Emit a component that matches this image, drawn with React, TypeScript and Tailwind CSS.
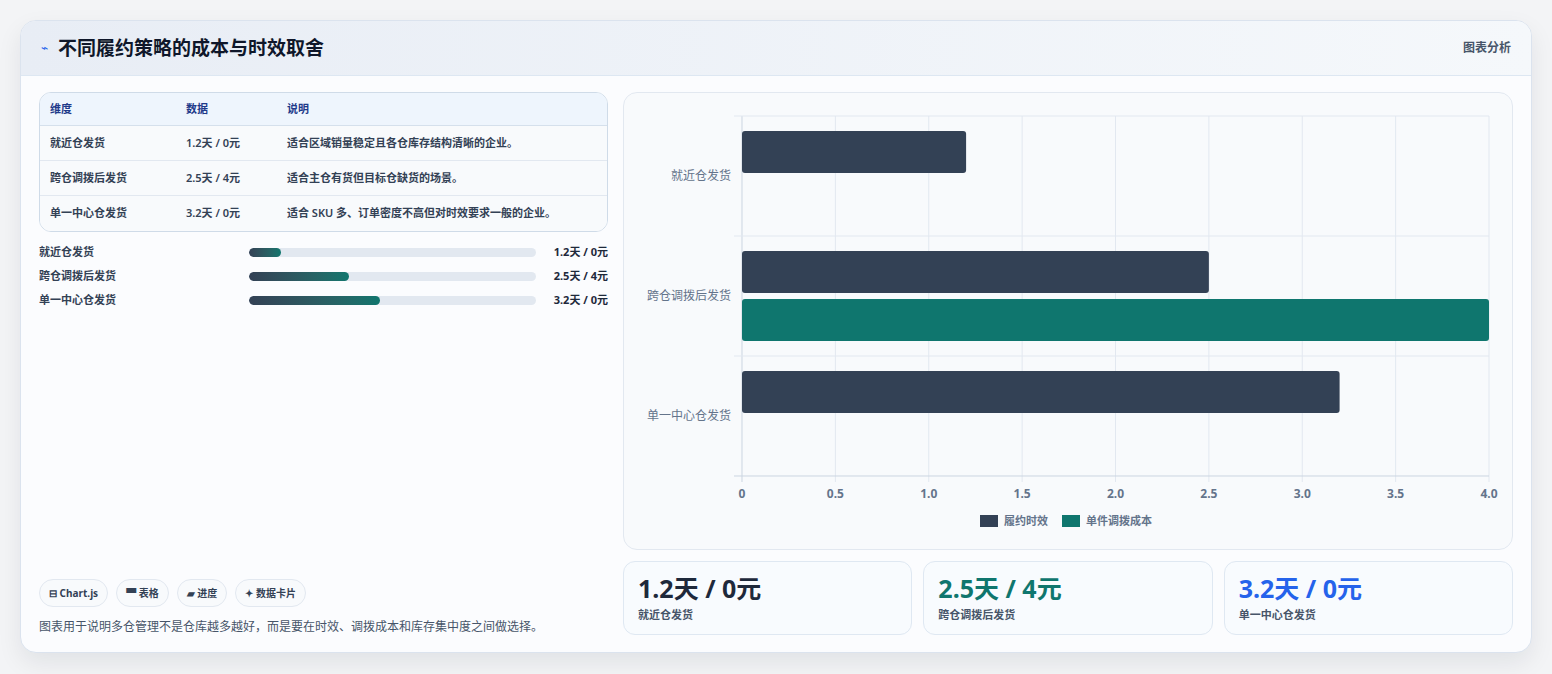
import React from "react";

const F = { fontFamily: '"Noto Sans", "Noto Sans CJK SC", sans-serif' };

const rows = [
  ["就近仓发货", "1.2天 / 0元", "适合区域销量稳定且各仓库存结构清晰的企业。", 0.11],
  ["跨仓调拨后发货", "2.5天 / 4元", "适合主仓有货但目标仓缺货的场景。", 0.35],
  ["单一中心仓发货", "3.2天 / 0元", "适合 SKU 多、订单密度不高但对时效要求一般的企业。", 0.455],
] as const;

function Chart() {
  const x0 = 118, x1 = 865, top = 23, bot = 383;
  const sx = (v: number) => x0 + ((x1 - x0) * v) / 4;
  const ticks = [0, 0.5, 1, 1.5, 2, 2.5, 3, 3.5, 4];
  const cats = ["就近仓发货", "跨仓调拨后发货", "单一中心仓发货"];
  const vals = [1.2, 2.5, 3.2];
  const costs = [0, 4, 0];
  return (
    <svg width="888" height="455" className="block">
      {ticks.map((t) => (
        <line key={t} x1={sx(t)} x2={sx(t)} y1={top} y2={bot + 6} stroke={t === 0 ? "#cbd5e1" : "#e2e8f0"} />
      ))}
      {[0, 1, 2, 3].map((i) => (
        <line key={i} x1={x0 - 8} x2={x1} y1={top + i * 120} y2={top + i * 120} stroke={i === 3 ? "#cbd5e1" : "#e2e8f0"} />
      ))}
      {cats.map((c, i) => {
        const by = top + i * 120;
        return (
          <g key={c}>
            <text x={107} y={by + 64} textAnchor="end" fontSize="12" fill="#64748b" style={F}>{c}</text>
            <rect x={x0} y={by + 15} width={sx(vals[i]) - x0} height={42} rx={3} fill="#334155" />
            {costs[i] > 0 && <rect x={x0} y={by + 63} width={sx(costs[i]) - x0} height={42} rx={3} fill="#0f766e" />}
          </g>
        );
      })}
      {ticks.map((t) => (
        <text key={t} x={sx(t)} y={405} textAnchor="middle" fontSize="12" fontWeight="700" fill="#64748b" style={F}>
          {t === 0 ? "0" : t.toFixed(1)}
        </text>
      ))}
      <rect x={356} y={422} width={18} height={12} fill="#334155" />
      <text x={380} y={432} fontSize="11" fontWeight="700" fill="#64748b" style={F}>履约时效</text>
      <rect x={438} y={422} width={18} height={12} fill="#0f766e" />
      <text x={462} y={432} fontSize="11" fontWeight="700" fill="#64748b" style={F}>单件调拨成本</text>
    </svg>
  );
}

export default function App() {
  return (
    <div style={F} className="w-[1552px] h-[674px] bg-[#f3f4f6] pt-[20px] pl-[20px]">
      <div className="w-[1512px] h-[633px] rounded-[16px] border border-[#dbe3ee] bg-[#fbfcfe] shadow-[0_10px_25px_rgba(15,23,42,0.08)] overflow-hidden flex flex-col">
        <div className="h-[55px] shrink-0 flex items-center justify-between px-[20px] bg-gradient-to-r from-[#e8edf5] to-[#f5f8fb] border-b border-[#dde7f2]">
          <div className="flex items-center gap-[10px]">
            <span className="text-[#2563eb] text-[12px] leading-none">⌁</span>
            <span className="text-[19px] font-bold text-[#0f172a]">不同履约策略的成本与时效取舍</span>
          </div>
          <span className="text-[12px] font-bold text-[#475569]">图表分析</span>
        </div>
        <div className="flex-1 flex gap-[15px] pt-[16px] pl-[18px] pr-[18px] pb-[18px]">
          <div className="w-[569px] flex flex-col">
            <div className="rounded-[12px] border border-[#cfdbe8] overflow-hidden bg-white">
              <div className="h-[33px] flex items-center bg-[#eef5fd] border-b border-[#d5e0ec] text-[11px] font-bold text-[#1e3a8a]">
                <div className="w-[146px] pl-[10px]">维度</div>
                <div className="w-[101px]">数据</div>
                <div>说明</div>
              </div>
              {rows.map((r, i) => (
                <div key={r[0]} className={`h-[35px] flex items-center text-[11px] font-semibold text-[#334155] bg-[#f8fafc] ${i < 2 ? "border-b border-[#e2e8f0]" : ""}`}>
                  <div className="w-[146px] pl-[10px]">{r[0]}</div>
                  <div className="w-[101px]">{r[1]}</div>
                  <div>{r[2]}</div>
                </div>
              ))}
            </div>
            <div className="mt-[12px] flex flex-col gap-[8px]">
              {rows.map((r) => (
                <div key={r[0]} className="h-[16px] flex items-center text-[11px] font-semibold text-[#334155]">
                  <div className="w-[210px]">{r[0]}</div>
                  <div className="w-[287px] h-[9px] rounded-full bg-[#e2e8f0] overflow-hidden">
                    <div className="h-full rounded-full bg-gradient-to-r from-[#334155] to-[#0f766e]" style={{ width: `${r[3] * 100}%` }} />
                  </div>
                  <div className="ml-auto font-bold text-[#1e293b]">{r[1]}</div>
                </div>
              ))}
            </div>
            <div className="mt-auto flex gap-[8px]">
              {["⊟ Chart.js", "▀ 表格", "▰ 进度", "✦ 数据卡片"].map((c) => (
                <span key={c} className="h-[28px] px-[9px] flex items-center rounded-full border border-[#e2e8f0] bg-[#f8fafc] text-[10px] font-bold text-[#334155]">{c}</span>
              ))}
            </div>
            <div className="mt-[12px] text-[12px] text-[#475569] leading-[16px]">图表用于说明多仓管理不是仓库越多越好，而是要在时效、调拨成本和库存集中度之间做选择。</div>
          </div>
          <div className="flex-1 flex flex-col gap-[11px]">
            <div className="h-[458px] rounded-[14px] border border-[#e2e8f0] bg-[#f8fafc] overflow-hidden">
              <Chart />
            </div>
            <div className="flex gap-[11px]">
              {[["1.2天 / 0元", "text-[#1e293b]", "就近仓发货"], ["2.5天 / 4元", "text-[#0f766e]", "跨仓调拨后发货"], ["3.2天 / 0元", "text-[#2563eb]", "单一中心仓发货"]].map((c) => (
                <div key={c[2]} className="flex-1 h-[74px] rounded-[12px] border border-[#dfe8f2] bg-[#f8fbfe] px-[14px] pt-[9px]">
                  <div className={`text-[25px] font-bold leading-[34px] ${c[1]}`}>{c[0]}</div>
                  <div className="text-[11px] font-semibold text-[#475569] mt-[2px]">{c[2]}</div>
                </div>
              ))}
            </div>
          </div>
        </div>
      </div>
    </div>
  );
}
